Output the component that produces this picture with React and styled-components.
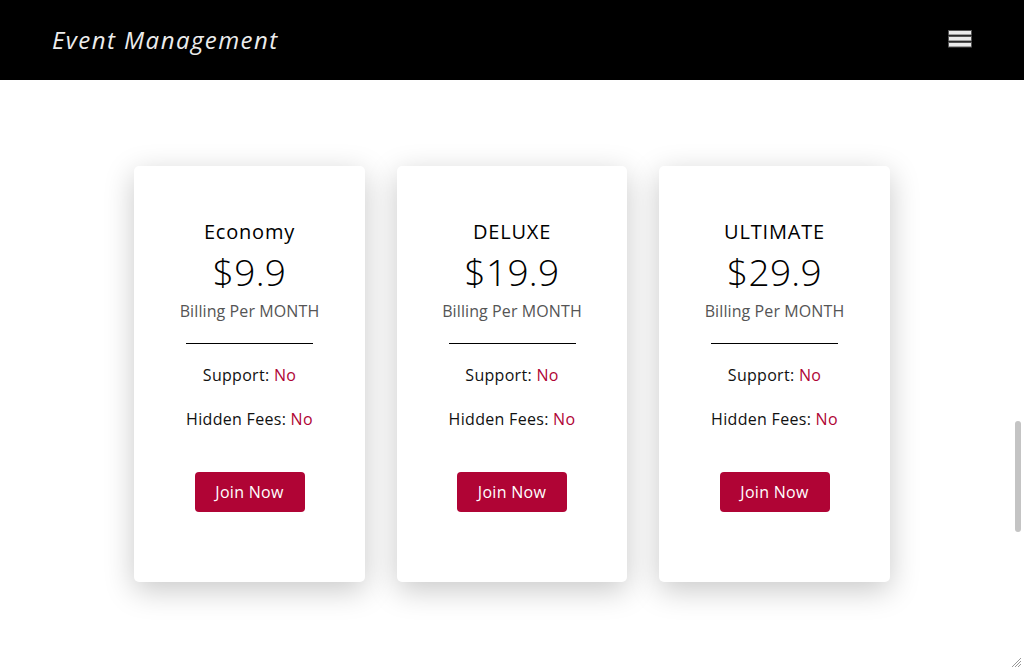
import React from 'react';
import styled, { createGlobalStyle } from 'styled-components';

const GlobalStyle = createGlobalStyle`
  html, body {
    margin: 0;
    padding: 0;
    background: #fff;
    font-family: "Open Sans", "Noto Sans", sans-serif;
  }
  * { box-sizing: border-box; }
`;

const plans = [
  { name: 'Economy', price: '$9.9' },
  { name: 'DELUXE', price: '$19.9' },
  { name: 'ULTIMATE', price: '$29.9' },
];

const Page = styled.div`
  min-height: 670px;
  background: #fff;
`;

const NavBar = styled.header`
  height: 80px;
  background: #000;
  display: flex;
  align-items: center;
  justify-content: space-between;
  padding: 0 52px 2px 52px;
`;

const Brand = styled.a`
  font-family: "Open Sans", "Noto Sans", sans-serif;
  font-style: italic;
  font-size: 24px;
  color: #ececec;
  letter-spacing: 1.45px;
  text-decoration: none;
`;

const MenuButton = styled.button`
  background: none;
  border: none;
  padding: 0;
  width: 24px;
  height: 18px;
  display: flex;
  cursor: pointer;
`;

const Pricing = styled.section`
  display: flex;
  justify-content: center;
  gap: 32px;
  padding: 86px 0 0;
`;

const Card = styled.div`
  width: 230.5px;
  height: 416px;
  background: #fff;
  border-radius: 5px;
  box-shadow: 0 8px 30px rgba(0, 0, 0, 0.22);
  display: flex;
  flex-direction: column;
  align-items: center;
  padding-top: 52px;
  color: #000;
`;

const PlanName = styled.h3`
  margin: 0;
  font-size: 20px;
  font-weight: 400;
  line-height: 28px;
  letter-spacing: 0.8px;
`;

const Price = styled.div`
  font-size: 37px;
  font-weight: 300;
  line-height: 48px;
  margin-top: 2px;
  letter-spacing: 0.3px;
`;

const Billing = styled.p`
  margin: 4px 0 0;
  font-size: 16px;
  color: #555;
  line-height: 22px;
  letter-spacing: 0.1px;
`;

const Rule = styled.hr`
  width: 127px;
  border: none;
  border-top: 1px solid #000;
  margin: 21px 0 0;
`;

const Feature = styled.p`
  margin: ${(p) => p.$top}px 0 0;
  font-size: 16px;
  line-height: 22px;
  color: #111;
  letter-spacing: 0.3px;
`;

const No = styled.span`
  color: #b00435;
`;

const JoinButton = styled.button`
  margin-top: 42px;
  width: 110px;
  height: 40px;
  border: none;
  border-radius: 4px;
  background: #b00435;
  color: #fff;
  font-family: inherit;
  font-size: 16px;
  letter-spacing: 0.3px;
  line-height: 38px;
  cursor: pointer;
`;

const ScrollThumb = styled.div`
  position: fixed;
  right: 3px;
  top: 421px;
  width: 6px;
  height: 111px;
  border-radius: 3px;
  background: #c4c4c4;
`;

const Grip = styled.svg`
  position: fixed;
  right: 2px;
  bottom: 2px;
`;

const MenuIcon = () => (
  <svg width="24" height="18" viewBox="0 0 24 18">
    <rect x="0.5" y="0.5" width="23" height="4.5" fill="#ececec" stroke="#555" />
    <rect x="0.5" y="6.5" width="23" height="4.5" fill="#ececec" stroke="#555" />
    <rect x="0.5" y="12.5" width="23" height="4.5" fill="#ececec" stroke="#555" />
  </svg>
);

export default function App() {
  return (
    <Page>
      <GlobalStyle />
      <NavBar>
        <Brand href="#">Event Management</Brand>
        <MenuButton aria-label="menu">
          <MenuIcon />
        </MenuButton>
      </NavBar>
      <Pricing>
        {plans.map((plan) => (
          <Card key={plan.name}>
            <PlanName>{plan.name}</PlanName>
            <Price>{plan.price}</Price>
            <Billing>Billing Per MONTH</Billing>
            <Rule />
            <Feature $top={20}>
              Support: <No>No</No>
            </Feature>
            <Feature $top={22}>
              Hidden Fees: <No>No</No>
            </Feature>
            <JoinButton>Join Now</JoinButton>
          </Card>
        ))}
      </Pricing>
      <ScrollThumb />
      <Grip width="11" height="11" viewBox="0 0 11 11">
        <path d="M1 10 L10 1 M4 10 L10 4 M7 10 L10 7" stroke="#999" strokeWidth="1" />
      </Grip>
    </Page>
  );
}
